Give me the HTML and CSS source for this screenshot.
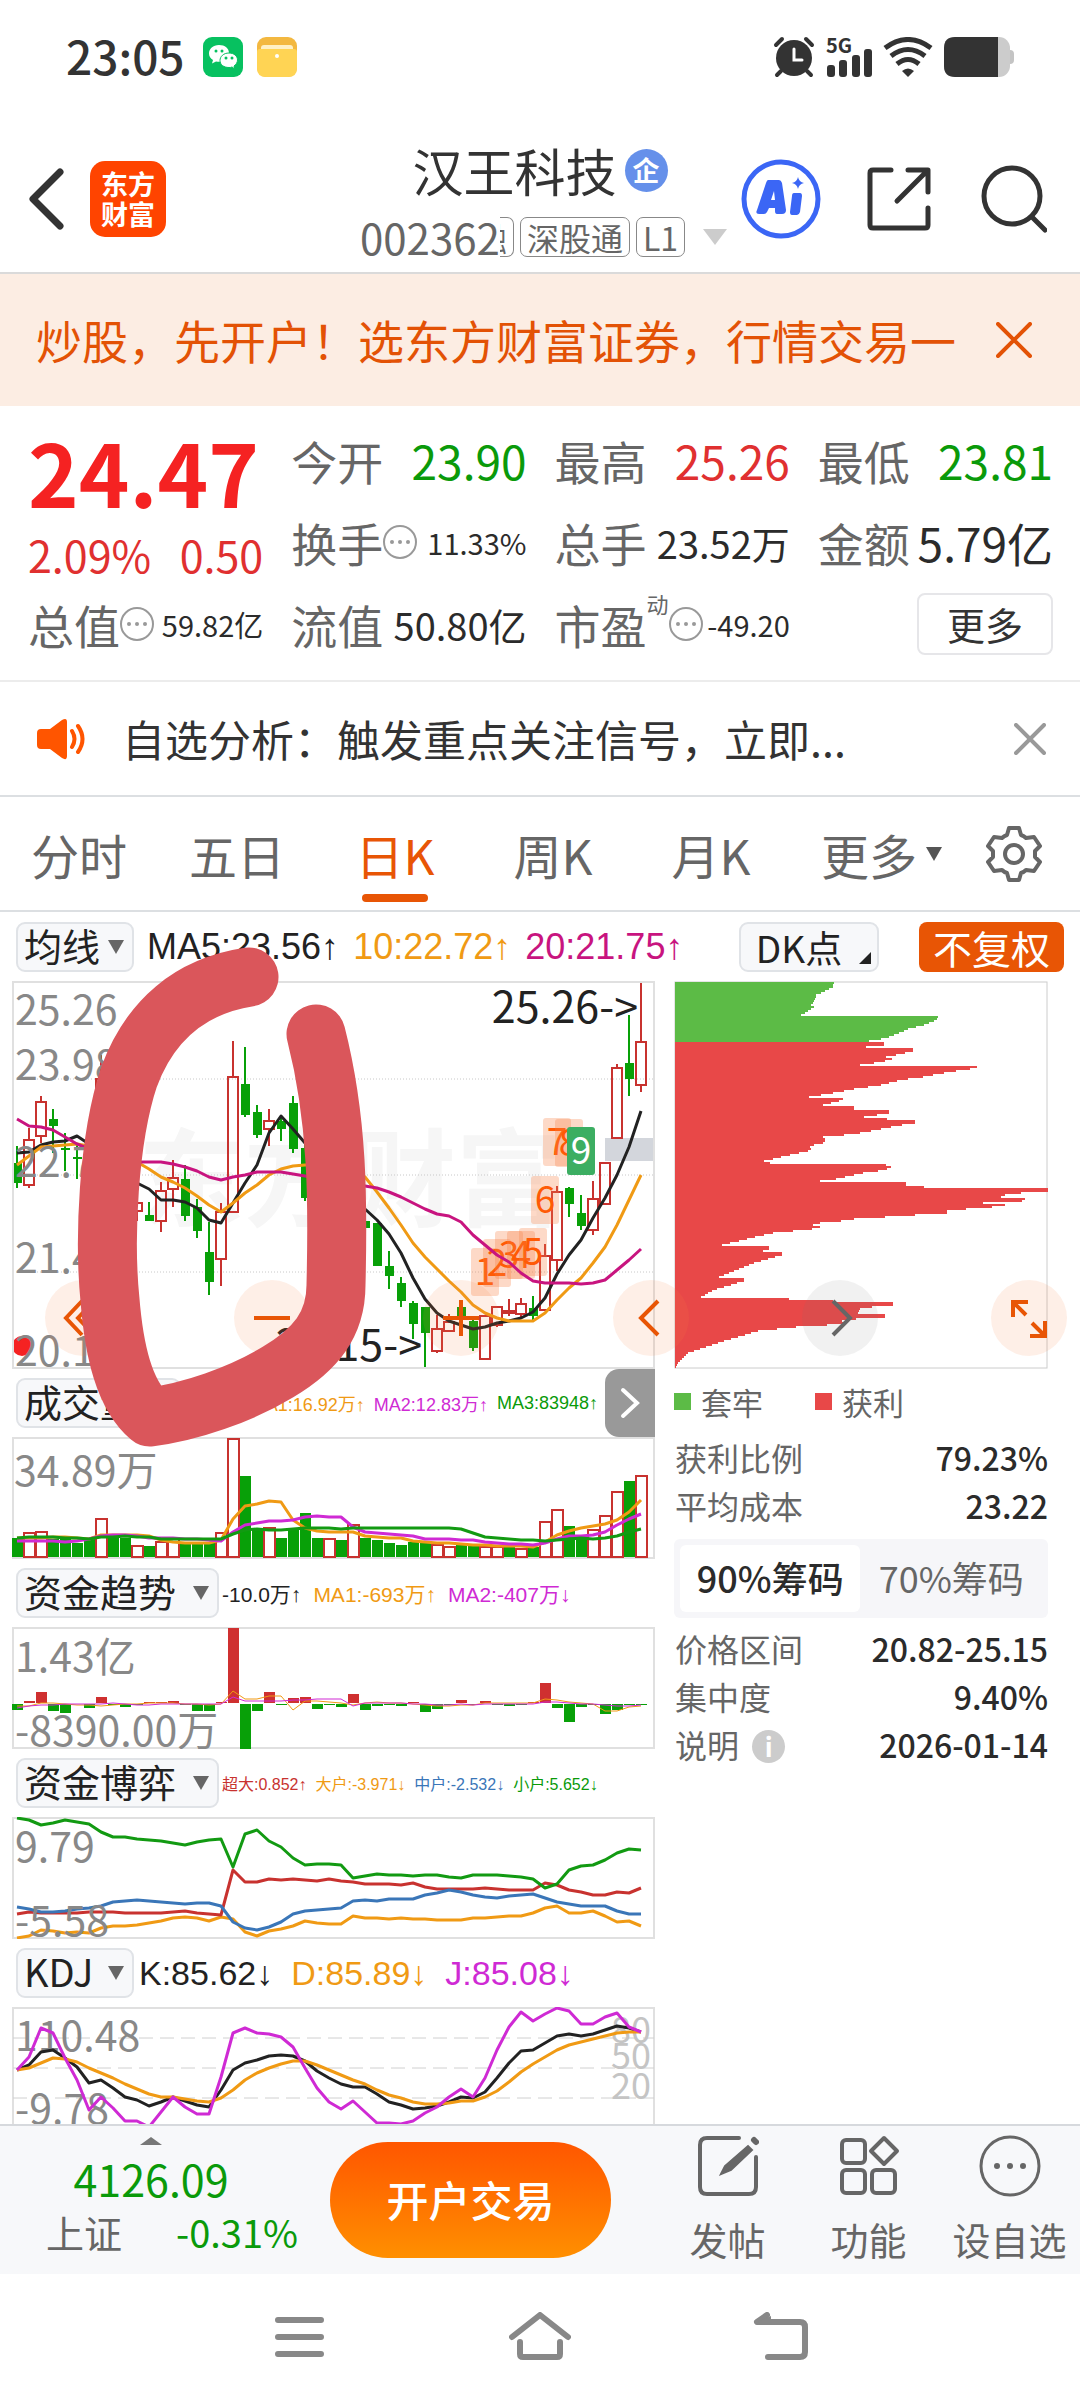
FILE: index.html
```html
<!DOCTYPE html>
<html lang="zh-CN">
<head>
    <meta charset="UTF-8">
    <meta name="viewport" content="width=device-width, initial-scale=1.0">
    <title>汉王科技 002362</title>
    <link rel="stylesheet" href="styles.css">
</head>
<body>

    <div class="status">
        <span class="time">23:05</span>
        <svg width="40" height="40" viewBox="0 0 40 40">
            <rect width="40" height="40" rx="9" fill="#07c160"/>
            <path d="M16 8c-6 0-10 4-10 8.500 0 3 1.500 5 4 6.500l-1 3.500 4-2c8 1.500 13-2.500 13-8S22 8 16 8z" fill="#fff"/>
            <path d="M26 16c-5.500 0-9 3.500-9 7.500s3.500 7 9 7c1 0 2 0 3-.5l3 2-1-3c2-1.500 3.500-3.500 3.500-6 0-4-3.500-7-8.500-7z" fill="#fff" stroke="#07c160" stroke-width="1"/>
            <g fill="#07c160"><circle cx="13" cy="14" r="1.500"/><circle cx="19" cy="14" r="1.500"/><circle cx="23" cy="21" r="1.500"/><circle cx="29" cy="21" r="1.500"/></g>
        </svg>
        <svg width="40" height="40" viewBox="0 0 40 40">
            <rect width="40" height="40" rx="9" fill="#f3b840"/>
            <rect x="4" y="8" width="32" height="10" rx="3" fill="#fff0c4"/>
            <path d="M0 15q0-3 3-3h34q3 0 3 3v16q0 9-9 9H9q-9 0-9-9z" fill="#ffd454"/>
            <circle cx="20" cy="19" r="2" fill="#fff"/>
        </svg>
        <div class="status-right">
            <svg width="42" height="42" viewBox="0 0 42 42" fill="none" stroke="#333" stroke-width="4" stroke-linecap="round">
                <circle cx="21" cy="22" r="18" fill="#333" stroke="none"/>
                <path d="M3 9l6-6M33 3l6 6M8 35l-4 4M34 35l4 4"/>
                <path d="M21 13v11h8" stroke="#fff" stroke-width="3"/>
            </svg>
            <div class="signal">
                <span>5G</span>
                <svg width="46" height="28" viewBox="0 0 46 28" fill="#333">
                    <rect x="1" y="16" width="8" height="12" rx="3"/><rect x="13" y="11" width="8" height="17" rx="3"/><rect x="26" y="6" width="8" height="22" rx="3"/><rect x="38" y="0" width="8" height="28" rx="3"/>
                </svg>
            </div>
            <svg width="50" height="40" viewBox="0 0 50 40" fill="none" stroke="#333" stroke-width="5">
                <path d="M2 11Q25-6 48 11M8 19q17-13 34 0M14 27q11-9 22 0"/>
                <path d="M19 34q6-5 12 0l-6 6z" fill="#333" stroke="none"/>
            </svg>
            <svg width="70" height="40" viewBox="0 0 70 40">
                <rect x="60" y="13" width="10" height="14" rx="4" fill="#c4c4c4"/>
                <rect width="66" height="40" rx="11" fill="#ccc"/>
                <path d="M11 0h43v40H11Q0 40 0 29V11Q0 0 11 0z" fill="#333"/>
            </svg>
        </div>
    </div>

    <header class="header">
        <a class="back" href="#" aria-label="返回">
            <svg width="36" height="62" viewBox="0 0 36 62" fill="none" stroke="#333" stroke-width="7" stroke-linecap="round" stroke-linejoin="round"><path d="M32 4L5 31l27 27"/></svg>
        </a>
        <a class="logo" href="#">东方<br>财富</a>
        <div class="title">
            <h1>汉王科技<span class="badge">企</span></h1>
            <div class="code">
                <span>002362</span>
                <span class="tag cut">融</span>
                <span class="tag">深股通</span>
                <span class="tag">L1</span>
                <svg class="more-caret" width="24" height="16" viewBox="0 0 24 16"><path d="M0 0h24L12 16z" fill="#ccc"/></svg>
            </div>
        </div>
        <div class="actions">
            <button aria-label="AI">
                <svg width="80" height="80" viewBox="0 0 80 80">
                    <circle cx="40" cy="40" r="37" fill="none" stroke="#3b66f5" stroke-width="5"/>
                    <path d="M27 21h11q2 0 3 3l4 27q0 4-4 4h-5q-2 0-2-3v-3h-6l-2 4q-1 2-3 2h-5q-4 0-2-4l9-27q1-3 2-3zm3 20h4l-1-9z" fill="#3b66f5" fill-rule="evenodd"/>
                    <path d="M53 34h6q2 0 2 3l-2 16q-1 3-3 3h-5q-2 0-2-3l2-16q0-3 2-3zM57 18q1 5 6 6-5 1-6 6-1-5-6-6 5-1 6-6z" fill="#3b66f5"/>
                </svg>
            </button>
            <button aria-label="分享">
                <svg width="64" height="64" viewBox="0 0 64 64" fill="none" stroke="#333" stroke-width="5" stroke-linecap="round" stroke-linejoin="round">
                    <path d="M24 3H6Q3 3 3 6v52q0 3 3 3h52q3 0 3-3V41M41 3h20v22M60 4L30 34"/>
                </svg>
            </button>
            <button aria-label="搜索">
                <svg width="70" height="68" viewBox="0 0 70 68" fill="none" stroke="#333" stroke-width="5" stroke-linecap="round">
                    <circle cx="35" cy="31" r="28"/><path d="M55 52l13 13"/>
                </svg>
            </button>
        </div>
    </header>

    <div class="promo">
        <a href="#">炒股，先开户！选东方财富证券，行情交易一</a>
        <button aria-label="关闭广告">
            <svg width="36" height="36" viewBox="0 0 36 36" stroke="#e35205" stroke-width="4" stroke-linecap="round"><path d="M2 2l32 32M34 2L2 34"/></svg>
        </button>
    </div>

    <section class="quote">
        <div class="price">
            <strong>24.47</strong>
            <div class="change"><span>2.09%</span><span>0.50</span></div>
        </div>
        <div class="item"><span>今开</span><b class="green">23.90</b></div>
        <div class="item"><span>最高</span><b class="red">25.26</b></div>
        <div class="item"><span>最低</span><b class="green">23.81</b></div>
        <div class="item"><span>换手</span><i class="dots"></i><b class="small">11.33%</b></div>
        <div class="item"><span>总手</span><b class="mid">23.52万</b></div>
        <div class="item"><span>金额</span><b>5.79亿</b></div>
        <div class="item"><span>总值</span><i class="dots"></i><b class="small">59.82亿</b></div>
        <div class="item"><span>流值</span><b class="mid">50.80亿</b></div>
        <div class="item"><span>市盈</span><sup>动</sup><i class="dots"></i><b class="small">-49.20</b></div>
        <div class="item"><button class="more">更多</button></div>
    </section>

    <div class="notice">
        <svg width="50" height="42" viewBox="0 0 50 42">
            <path d="M4 11h9L25 2q5-3 5 2v34q0 5-5 2L13 31H4q-4 0-4-4V15q0-4 4-4z" fill="#ff5500"/>
            <path d="M35 13q5 8 0 16M41 8q9 13 0 26" fill="none" stroke="#ff5500" stroke-width="4" stroke-linecap="round"/>
        </svg>
        <a href="#">自选分析：触发重点关注信号，立即...</a>
        <button aria-label="关闭提示">
            <svg width="32" height="32" viewBox="0 0 32 32" stroke="#999" stroke-width="4" stroke-linecap="round"><path d="M2 2l28 28M30 2L2 30"/></svg>
        </button>
    </div>

    <nav class="tabs">
        <button>分时</button>
        <button>五日</button>
        <button class="active">日K</button>
        <button>周K</button>
        <button>月K</button>
        <button class="period">更多<i class="caret"></i></button>
        <button aria-label="设置">
            <svg width="58" height="58" viewBox="0 0 58 58" fill="none" stroke="#666" stroke-width="4" stroke-linejoin="round">
                <path d="M24 3h10l2 7q3 1 5 3l8-1 6 9-5 5v6l5 5-6 9-8-1q-2 2-5 3l-2 7H24l-2-7q-3-1-5-3l-8 1-6-9 5-5v-6l-5-5 6-9 8 1q2-2 5-3z"/>
                <circle cx="29" cy="29" r="9"/>
            </svg>
        </button>
    </nav>

    <main class="charts">
        <div class="toolbar">
            <label class="pick short"><select aria-label="均线"><option>均线</option></select></label>
            <div class="legend ma">
                <span>MA5:23.56↑</span><span class="orange">10:22.72↑</span><span class="rose">20:21.75↑</span>
            </div>
            <button class="dk">DK点</button>
            <button class="fuquan">不复权</button>
        </div>

        <div class="left">
            <svg class="chart" viewBox="0 0 643 388">
                <text class="watermark" x="126" y="237">东方财富</text>
                <path class="dotted" d="M1 98H642M1 194H642M1 291H642"/>
                <rect x="593" y="157" width="49" height="23" fill="#d3d6dc"/>
                <circle cx="10" cy="365" r="10" fill="#f52222"/>
                <g id="candles"></g>
                <g id="signals"></g>
                <g id="maLines"></g>
                <g class="axis">
                    <text x="3" y="44">25.26</text><text x="3" y="99">23.98</text><text x="3" y="196">22.71</text><text x="3" y="292">21.43</text><text x="3" y="385">20.15</text>
                </g>
                <g class="mark"><text x="626" y="42">25.26-&gt;</text><text x="410" y="380">20.15-&gt;</text></g>
                <rect class="frame" x="1" y="1" width="641" height="386"/>
            </svg>

            <div class="row">
                <label class="pick mid"><select aria-label="副图一"><option>成交量</option></select></label>
                <div class="legend vol">
                    <span class="orange">MA1:16.92万↑</span><span class="purple">MA2:12.83万↑</span><span class="green">MA3:83948↑</span>
                </div>
                <button class="next" aria-label="下一组">
                    <svg width="20" height="32" viewBox="0 0 20 32" fill="none" stroke="#fff" stroke-width="4" stroke-linecap="round"><path d="M3 3l14 13L3 29"/></svg>
                </button>
            </div>
            <svg class="chart" viewBox="0 0 643 122">
                <rect class="frame" x="1" y="1" width="641" height="120"/>
                <g id="volume"></g>
                <g class="axis"><text x="2" y="49">34.89万</text></g>
            </svg>

            <div class="row">
                <label class="pick long"><select aria-label="副图二"><option>资金趋势</option></select></label>
                <div class="legend trend">
                    <span>-10.0万↑</span><span class="orange">MA1:-693万↑</span><span class="purple">MA2:-407万↓</span>
                </div>
            </div>
            <svg class="chart" viewBox="0 0 643 122">
                <rect class="frame" x="1" y="1" width="641" height="120"/>
                <g id="fund"></g>
                <g class="axis"><text x="3" y="45">1.43亿</text><text x="3" y="119">-8390.00万</text></g>
            </svg>

            <div class="row">
                <label class="pick long"><select aria-label="副图三"><option>资金博弈</option></select></label>
                <div class="legend game">
                    <span class="red">超大:0.852↑</span><span class="orange">大户:-3.971↓</span><span class="blue">中户:-2.532↓</span><span class="green">小户:5.652↓</span>
                </div>
            </div>
            <svg class="chart" viewBox="0 0 643 122">
                <rect class="frame" x="1" y="1" width="641" height="120"/>
                <g id="game"></g>
                <g class="axis"><text x="3" y="45">9.79</text><text x="3" y="119">-5.58</text></g>
            </svg>

            <div class="row">
                <label class="pick short"><select aria-label="副图四"><option>KDJ</option></select></label>
                <div class="legend kdj">
                    <span>K:85.62↓</span><span class="orange">D:85.89↓</span><span class="purple">J:85.08↓</span>
                </div>
            </div>
            <svg class="chart" viewBox="0 0 643 117">
                <path class="frame" d="M1 118V1H642V118"/>
                <path class="dashed" d="M1 31H642M1 61H642M1 91H642"/>
                <g class="axis right"><text x="639" y="36">80</text><text x="639" y="62">50</text><text x="639" y="92">20</text></g>
                <g class="axis"><text x="3" y="44">110.48</text><text x="3" y="117">-9.78</text></g>
                <g id="kdj"></g>
            </svg>
        </div>

        <aside class="right-col">
            <svg class="chart" viewBox="0 0 374 388">
                <rect x="1" y="1" width="372" height="386" fill="none" stroke="#ccc"/>
                <g id="chips"></g>
            </svg>
            <div class="keys">
                <span><i class="sq trapped"></i>套牢</span>
                <span><i class="sq profit"></i>获利</span>
            </div>
            <dl class="facts">
                <div><dt>获利比例</dt><dd>79.23%</dd></div>
                <div><dt>平均成本</dt><dd>23.22</dd></div>
            </dl>
            <div class="toggle">
                <button class="on">90%筹码</button>
                <button>70%筹码</button>
            </div>
            <dl class="facts">
                <div><dt>价格区间</dt><dd>20.82-25.15</dd></div>
                <div><dt>集中度</dt><dd>9.40%</dd></div>
                <div><dt>说明 <i class="info">i</i></dt><dd>2026-01-14</dd></div>
            </dl>
        </aside>

        <div class="controls">
            <button aria-label="快退"><svg viewBox="0 0 76 76"><path d="M49 21L33 38l16 17M37 21L21 38l16 17"/></svg></button>
            <button aria-label="缩小"><svg viewBox="0 0 76 76"><path d="M20 38h36"/></svg></button>
            <button aria-label="放大"><svg viewBox="0 0 76 76"><path d="M20 38h36M38 20v36"/></svg></button>
            <button aria-label="左移"><svg viewBox="0 0 76 76"><path d="M45 21L28 38l17 17"/></svg></button>
            <button class="grey" aria-label="右移"><svg viewBox="0 0 76 76"><path d="M31 21l17 17-17 17"/></svg></button>
            <button aria-label="全屏"><svg viewBox="0 0 76 76"><path d="M37 22H22v15M22 22l13 13M54 41v15H39M54 56L41 43"/></svg></button>
        </div>

        <svg class="pen" viewBox="0 0 1080 560">
            <path d="M249 65C190 74 150 108 129 165C108 228 104 328 110 388C114 438 124 483 150 505C190 500 240 483 278 460C315 438 336 413 336 373C338 290 338 208 316 122"/>
        </svg>
    </main>

    <footer class="bottom">
        <a class="index" href="#">
            <svg width="22" height="8" viewBox="0 0 22 8"><path d="M0 8L11 0l11 8z" fill="#777"/></svg>
            <span class="green point">4126.09</span>
            <span class="index-row"><span>上证</span><span class="green">-0.31%</span></span>
        </a>
        <button class="trade">开户交易</button>
        <div class="tools">
            <a href="#">
                <svg width="62" height="62" viewBox="0 0 62 62" fill="none" stroke="#666" stroke-width="4" stroke-linecap="round">
                    <path d="M42 3H10Q3 3 3 10v42q0 7 7 7h42q7 0 7-7V22"/><path d="M24 39l4-8L51 11l4 4-21 20z" fill="#666" stroke-width="2"/><path d="M57 5l2 2" stroke-width="6"/>
                </svg>
                发帖
            </a>
            <a href="#">
                <svg width="62" height="62" viewBox="0 0 62 62" fill="none" stroke="#666" stroke-width="4" stroke-linejoin="round">
                    <rect x="4" y="5" width="23" height="23" rx="4"/><rect x="4" y="35" width="23" height="23" rx="4"/><rect x="34" y="35" width="23" height="23" rx="4"/><path d="M46 3l13 13-13 13-13-13z"/>
                </svg>
                功能
            </a>
            <a href="#">
                <svg width="62" height="62" viewBox="0 0 62 62">
                    <circle cx="31" cy="31" r="29" fill="none" stroke="#666" stroke-width="3"/>
                    <g fill="#666"><circle cx="18" cy="31" r="3"/><circle cx="31" cy="31" r="3"/><circle cx="44" cy="31" r="3"/></g>
                </svg>
                设自选
            </a>
        </div>
    </footer>

    <nav class="sysnav">
        <button aria-label="最近任务"><svg width="62" height="50" viewBox="0 0 62 50" stroke="#888" stroke-width="6" stroke-linecap="round"><path d="M10 8h43M10 25h43M10 42h43"/></svg></button>
        <button aria-label="主页"><svg width="62" height="50" viewBox="0 0 62 50" fill="none" stroke="#888" stroke-width="6" stroke-linecap="round" stroke-linejoin="round"><path d="M3 25L31 3l28 22M11 30v12q0 3 3 3h34q3 0 3-3V30"/></svg></button>
        <button aria-label="返回上一页"><svg width="62" height="50" viewBox="0 0 62 50" fill="none" stroke="#888" stroke-width="6" stroke-linecap="round" stroke-linejoin="round"><path d="M17 3L7 10h43q5 0 5 5v25q0 5-5 5H18"/><path d="M7 10h14V4z" fill="#888" stroke="none"/></svg></button>
    </nav>

    <script src="script.js"></script>
</body>
</html>
```
FILE: styles.css
```css
:root {
    --text: #333;
    --sub: #666;
    --line: #dcdfe2;
    --red: #e03030;
    --green: #0a9a0a;
    --orange: #e85505;
    --panel: #f7f8fa;
}

* {
    box-sizing: border-box;
}

body {
    margin: 0;
    background: #fff;
    color: var(--text);
    font-family: "Noto Sans CJK SC", "Noto Sans", sans-serif;
    overflow-x: hidden;
}

button, select {
    font: inherit;
    color: inherit;
    background: none;
    border: none;
    padding: 0;
    margin: 0;
    cursor: pointer;
}

a {
    color: inherit;
    text-decoration: none;
}

svg {
    display: block;
    flex: none;
}

.green { color: var(--green); }
.red { color: #c8322f; }
.orange { color: #f09a14; }
.rose { color: #c8147f; }
.purple { color: #cf2ad4; }
.blue { color: #3a76b8; }

/* status bar */
.status {
    display: flex;
    align-items: center;
    gap: 14px;
    height: 114px;
    padding: 0 66px;
}

.time {
    font-size: 46px;
    font-weight: 500;
    line-height: 50px;
    margin-right: 4px;
    padding-bottom: 4px;
}

.status-right {
    display: flex;
    align-items: center;
    gap: 11px;
    margin-left: auto;
}

.signal {
    height: 40px;
}

.signal span {
    display: block;
    font-size: 20px;
    font-weight: 700;
    line-height: 16px;
    height: 12px;
}

/* header */
.header {
    display: flex;
    align-items: center;
    height: 160px;
    padding: 12px 33px 0 28px;
    border-bottom: 2px solid #dadada;
}

.logo {
    width: 76px;
    height: 76px;
    margin-left: 26px;
    padding: 8px 0;
    border-radius: 15px;
    background: #ff4400;
    color: #fff;
    font-size: 27px;
    font-weight: 700;
    line-height: 30px;
    text-align: center;
}

.title {
    flex: 1;
    margin-left: 194px;
    padding-top: 12px;
}

h1 {
    display: flex;
    align-items: center;
    justify-content: center;
    gap: 8px;
    width: 354px;
    margin: 0;
    padding-left: 6px;
    font-size: 51px;
    font-weight: 400;
    line-height: 64px;
    white-space: nowrap;
}

.badge {
    width: 43px;
    height: 43px;
    border-radius: 50%;
    background: #6590ea;
    color: #fff;
    font-size: 27px;
    font-weight: 700;
    line-height: 42px;
    text-align: center;
}

.code {
    display: flex;
    align-items: center;
    gap: 6px;
    color: var(--sub);
    font-size: 42px;
    line-height: 70px;
    white-space: nowrap;
}

.tag {
    padding: 0 6px;
    border: 1px solid #888;
    border-radius: 7px;
    font-size: 32px;
    line-height: 38px;
}

.tag.cut {
    display: flex;
    justify-content: flex-end;
    width: 14px;
    margin-left: -6px;
    border-left: none;
    border-radius: 0 7px 7px 0;
    overflow: hidden;
}

.more-caret {
    margin-left: 12px;
}

.actions {
    display: flex;
    align-items: center;
    gap: 46px;
}

/* promo */
.promo {
    display: flex;
    align-items: center;
    justify-content: space-between;
    height: 132px;
    padding: 0 48px 0 36px;
    background: #fcede3;
    color: #e35205;
    font-size: 46px;
}

.promo a {
    padding-bottom: 2px;
    white-space: nowrap;
    overflow: hidden;
}

/* quote */
.quote {
    display: grid;
    grid-template-columns: repeat(4, 1fr);
    grid-auto-rows: 82px;
    column-gap: 28px;
    padding: 13px 27px 15px 28px;
    border-bottom: 2px solid #ececec;
}

.price {
    grid-row: span 2;
    color: #f52222;
}

.price strong {
    display: block;
    font-size: 86px;
    line-height: 104px;
}

.change {
    display: flex;
    justify-content: space-between;
    color: var(--red);
    font-size: 43px;
    line-height: 62px;
}

.item {
    display: flex;
    align-items: center;
    color: var(--sub);
    font-size: 46px;
    white-space: nowrap;
}

.item b {
    margin-left: auto;
    color: #2b2b2b;
    font-weight: 400;
}

.item b.red { color: var(--red); }
.item b.green { color: var(--green); }
.item b.mid { font-size: 38px; }
.item b.small { font-size: 29px; }

.item sup {
    align-self: flex-start;
    font-size: 22px;
    line-height: 40px;
}

.dots {
    display: flex;
    align-items: center;
    justify-content: center;
    width: 34px;
    height: 34px;
    border: 2px solid #999;
    border-radius: 50%;
}

.dots::before {
    content: "";
    width: 4px;
    height: 4px;
    border-radius: 50%;
    background: #999;
    box-shadow: -8px 0 #999, 8px 0 #999;
}

.more {
    width: 136px;
    height: 62px;
    margin-left: auto;
    border: 2px solid #e6e6e9;
    border-radius: 8px;
    color: var(--text);
    font-size: 38px;
    line-height: 56px;
}

/* notice */
.notice {
    display: flex;
    align-items: center;
    height: 115px;
    padding: 0 34px 0 37px;
    border-bottom: 2px solid var(--line);
    font-size: 43px;
}

.notice a {
    margin: 0 auto 0 35px;
    padding-bottom: 2px;
    white-space: nowrap;
}

/* period tabs */
.tabs {
    display: grid;
    grid-template-columns: repeat(6, 158fr) 132fr;
    height: 115px;
    border-bottom: 2px solid var(--line);
    color: var(--sub);
    font-size: 48px;
}

.tabs button {
    display: flex;
    align-items: center;
    justify-content: center;
    position: relative;
    white-space: nowrap;
}

.tabs .period {
    justify-content: flex-end;
    padding-right: 6px;
}

.tabs .active {
    color: var(--orange);
}

.tabs .active::after {
    content: "";
    position: absolute;
    bottom: 8px;
    width: 66px;
    height: 8px;
    border-radius: 4px;
    background: var(--orange);
}

.caret {
    margin-left: 9px;
    border: 8px solid transparent;
    border-top: 14px solid #555;
    border-bottom: none;
}

/* charts */
.charts {
    position: relative;
    display: grid;
    grid-template-columns: 643fr 374fr;
    column-gap: 19px;
    padding: 0 32px 0 12px;
}

.toolbar {
    grid-column: 1 / -1;
    display: flex;
    align-items: center;
    height: 69px;
    margin-right: -16px;
}

.row {
    display: flex;
    align-items: center;
    height: 68px;
}

.chart {
    width: 100%;
    height: auto;
    overflow: hidden;
}

.pick {
    position: relative;
    flex: none;
    height: 50px;
    margin-left: 4px;
    border: 2px solid #e0e3e7;
    border-radius: 9px;
    background: var(--panel);
    color: #222;
    font-size: 38px;
}

.pick.short { width: 118px; }
.pick.mid { width: 165px; }
.pick.long { width: 203px; }

.pick select {
    display: block;
    width: 100%;
    height: 46px;
    padding: 0 0 4px 6px;
    line-height: 42px;
    appearance: none;
}

.pick::after {
    content: "";
    position: absolute;
    right: 8px;
    top: 16px;
    border: 8px solid transparent;
    border-top: 14px solid #666;
    border-bottom: none;
    pointer-events: none;
}

.legend {
    display: flex;
    align-items: center;
    color: #222;
    font-family: "Liberation Sans", "Noto Sans CJK SC", sans-serif;
    white-space: nowrap;
}

.legend.ma { margin-left: 13px; gap: 14px; font-size: 36px; }
.legend.vol { margin-left: auto; margin-right: 7px; gap: 9px; font-size: 18px; }
.legend.trend { margin-left: 3px; gap: 12px; font-size: 21px; }
.legend.game { margin-left: 3px; gap: 9px; font-size: 16px; }
.legend.kdj { margin-left: 5px; gap: 18px; font-size: 34px; }

.dk {
    position: relative;
    width: 140px;
    height: 50px;
    margin-left: auto;
    padding-right: 20px;
    border: 2px solid #e0e3e7;
    border-radius: 9px;
    background: var(--panel);
    color: #222;
    font-size: 37px;
    line-height: 42px;
    white-space: nowrap;
}

.dk::after {
    content: "";
    position: absolute;
    right: 6px;
    bottom: 6px;
    border-left: 12px solid transparent;
    border-bottom: 12px solid #222;
}

.fuquan {
    width: 145px;
    height: 50px;
    margin-left: 40px;
    border-radius: 8px;
    background: var(--orange);
    color: #fff;
    font-size: 39px;
    line-height: 46px;
}

.next {
    display: flex;
    align-items: center;
    justify-content: center;
    width: 50px;
    height: 68px;
    border-radius: 14px 0 0 14px;
    background: #999;
}

.frame { fill: none; stroke: #e0e0e0; stroke-width: 2; }
.dotted { stroke: #c8c8c8; stroke-dasharray: 1 2; }
.dashed { stroke: #d0d0d0; stroke-width: 1; stroke-dasharray: 14 7; }
.watermark { font-size: 106px; font-weight: 700; fill: #f6f6f6; }
.axis text { font-size: 41px; fill: #888; }
.axis.right text { font-size: 36px; fill: #c4c4c4; text-anchor: end; }
.mark text { font-size: 43px; fill: #222; text-anchor: end; }
.signal-no { font-size: 37px; text-anchor: middle; }

/* chip distribution */
.keys {
    display: flex;
    gap: 52px;
    height: 64px;
    align-items: center;
    color: var(--sub);
    font-size: 31px;
}

.keys span {
    display: flex;
    align-items: center;
    gap: 10px;
}

.sq {
    width: 17px;
    height: 17px;
}

.trapped { background: #5cbb46; }
.profit { background: #e84848; }

.facts {
    margin: 0 0 0 1px;
    color: var(--sub);
    font-size: 32px;
    line-height: 48px;
}

.facts div {
    display: flex;
    justify-content: space-between;
}

.facts dd {
    margin: 0;
    color: #2b2b2b;
    font-weight: 500;
}

.info {
    display: inline-block;
    width: 33px;
    height: 33px;
    margin-left: 6px;
    border-radius: 50%;
    background: #ccc;
    color: #fff;
    font-size: 26px;
    font-style: normal;
    font-weight: 700;
    line-height: 32px;
    text-align: center;
    vertical-align: 1px;
}

.toggle {
    display: grid;
    grid-template-columns: 180fr 181fr;
    height: 79px;
    margin: 10px 0 6px;
    padding: 6px;
    border-radius: 6px;
    background: #f6f6f9;
    color: var(--sub);
    font-size: 36px;
    white-space: nowrap;
}

.toggle button {
    padding-bottom: 4px;
}

.toggle .on {
    border-radius: 6px;
    background: #fff;
    color: #2b2b2b;
    font-weight: 500;
}

/* round buttons over the charts */
.controls {
    position: absolute;
    top: 368px;
    left: 45px;
    right: 13px;
    display: flex;
    justify-content: space-between;
}

.controls button {
    width: 76px;
    height: 76px;
    border-radius: 50%;
    background: rgba(250, 130, 70, 0.13);
}

.controls .grey {
    background: rgba(120, 120, 120, 0.1);
}

.controls path {
    fill: none;
    stroke: var(--orange);
    stroke-width: 4;
}

.controls .grey path {
    stroke: #666;
}

.pen {
    position: absolute;
    top: 0;
    left: 0;
    width: 100%;
    pointer-events: none;
}

.pen path {
    fill: none;
    stroke: #da565b;
    stroke-width: 59;
    stroke-linecap: round;
    stroke-linejoin: round;
}

/* bottom bar */
.bottom {
    display: flex;
    align-items: center;
    height: 150px;
    border-top: 2px solid #d6d9dd;
    background: var(--panel);
}

.index {
    display: flex;
    flex-direction: column;
    align-items: center;
    width: 302px;
    padding-bottom: 4px;
    color: var(--sub);
    font-size: 38px;
    line-height: 54px;
}

.point {
    margin-top: 6px;
    font-size: 43px;
    line-height: 54px;
}

.index-row {
    display: flex;
    justify-content: space-between;
    width: 100%;
    padding: 0 4px 0 46px;
}

.trade {
    width: 281px;
    height: 116px;
    margin-left: 28px;
    padding-bottom: 4px;
    border-radius: 58px;
    background: linear-gradient(#ff5600, #ff8f00);
    color: #fff;
    font-size: 42px;
    font-weight: 500;
}

.tools {
    display: grid;
    grid-template-columns: repeat(3, 141px);
    margin-left: auto;
    color: var(--sub);
    font-size: 38px;
    line-height: 52px;
}

.tools a {
    display: flex;
    flex-direction: column;
    align-items: center;
    gap: 16px;
}

/* system navigation */
.sysnav {
    display: grid;
    grid-template-columns: repeat(3, 1fr);
    justify-items: center;
    align-items: center;
    width: 67%;
    height: 126px;
    margin: 0 auto;
}
```
FILE: script.js
```js
const STEP = 12;
const START = 5;
const RED = '#c8322f';
const GREEN = '#08a008';
const ORANGE = '#f09a14';
const PURPLE = '#cf2ad4';

// x of the n-th day
const px = i => START + i * STEP;

function line(values, color, width) {
    const points = values.map((y, i) => `${px(i)},${y}`).join(' ');
    return `<polyline points="${points}" fill="none" stroke="${color}" stroke-width="${width}" stroke-linejoin="round"/>`;
}

function put(id, html) {
    document.getElementById(id).innerHTML = html;
}

// [day, high, top, bottom, low, up]
const candles = [
    [0,165,182,202,207,0],[1,147,159,204,207,1],[2,115,121,155,162,1],[3,128,138,145,172,0],[4,152,167,169,190,0],
    [5,164,176,178,198,0],[7,74,98,150,170,1],[10,216,222,230,240,1],[11,221,234,240,240,0],[12,201,210,240,251,1],
    [13,179,197,208,226,1],[14,184,198,235,240,0],[15,218,226,250,257,0],[16,241,271,301,314,0],[17,222,231,278,305,1],
    [18,60,96,231,232,1],[19,66,103,134,136,0],[20,124,131,154,157,0],[21,128,140,148,165,1],[22,135,140,148,160,0],
    [23,115,122,168,172,0],[24,160,167,217,220,0],[29,227,240,247,263,0],[30,242,242,285,285,0],[31,270,285,295,308,0],
    [32,296,302,320,326,0],[33,320,322,343,358,0],[34,326,326,352,388,0],[35,334,348,370,372,1],[36,333,341,350,350,1],
    [37,320,326,339,346,0],[38,339,340,367,370,0],[39,335,335,378,379,1],[40,325,326,344,346,1],[41,318,330,332,335,1],
    [42,317,323,333,336,1],[43,315,327,335,339,0],[44,263,275,329,329,1],[45,205,211,279,290,1],[46,206,207,223,236,0],
    [47,214,232,245,249,0],[48,200,218,249,254,1],[49,181,182,223,223,1],[50,83,87,157,157,1],[51,34,82,98,115,0],
    [52,1,61,104,111,1]
];

put('candles', candles.map(([i, high, top, bottom, low, up]) => {
    const x = px(i);
    if (up) {
        return `<path d="M${x} ${high}V${top}M${x} ${bottom}V${low}" stroke="${RED}" stroke-width="2"/>
            <rect x="${x - 5}" y="${top}" width="10" height="${bottom - top}" fill="none" stroke="${RED}" stroke-width="2"/>`;
    }
    return `<path d="M${x} ${high}V${low}" stroke="${GREEN}" stroke-width="2"/>
        <rect x="${x - 4}" y="${top}" width="9" height="${bottom - top}" fill="${GREEN}"/>`;
}).join(''));

const ma5 = [172,171,164,161,160,155,163,176,188,196,202,208,219,219,221,227,239,242,222,202,184,152,135,148,162,175,188,202,215,228,239,253,272,297,318,332,340,344,348,346,342,340,337,331,317,293,274,259,237,217,194,166,130];
const ma10 = [184,175,166,165,164,163,165,168,172,176,181,188,196,201,207,215,224,231,222,212,204,194,188,185,184,184,186,188,191,196,211,227,244,262,276,288,300,311,324,332,337,340,340,340,332,319,307,297,282,266,244,219,194];
const ma20 = [138,145,146,149,156,163,168,173,177,180,181,181,181,183,186,190,196,199,196,194,191,191,191,193,195,197,199,201,203,205,207,211,216,222,228,233,235,241,254,264,274,281,292,300,302,302,302,303,302,299,289,279,268];
put('maLines', line(ma5, '#222', 3) + line(ma10, ORANGE, 3) + line(ma20, '#c8147f', 3));

const signalTops = [267, 258, 250, 250, 247, 195, 137, 138, 146];
put('signals', signalTops.map((y, i) => {
    const x = 459 + i * STEP;
    const last = i === 8;
    return `<rect x="${x}" y="${y}" width="28" height="48" rx="3" fill="${last ? '#3cae62' : '#fa8246'}" fill-opacity="${last ? 1 : 0.3}"/>
        <text class="signal-no" x="${x + 14}" y="${y + 37}" fill="${last ? '#fff' : '#ff5a05'}">${i + 1}</text>`;
}).join(''));

const volumes = [19,24,25,18,18,14,19,38,19,19,11,11,15,19,14,13,14,24,118,81,28,29,19,27,44,19,18,17,32,19,17,14,12,15,15,12,10,13,11,10,10,10,8,10,35,47,31,22,27,41,65,76,81];
const upDays = [1,2,7,10,12,13,17,18,21,26,28,35,36,39,40,42,44,45,48,49,50,52];
const volMa1 = [101,101,101,100,100,101,102,98,98,98,98,99,103,105,106,106,106,103,82,69,67,64,65,83,91,94,95,95,95,99,100,101,101,104,105,106,106,107,108,108,109,109,109,110,105,98,94,91,89,87,83,75,63];
const volMa2 = [104,104,104,104,105,104,102,99,98,98,99,101,101,101,102,102,103,104,95,88,86,84,84,83,80,79,80,80,90,95,96,97,98,99,102,102,102,103,103,105,106,107,107,108,106,102,99,99,98,95,88,82,77];
const volMa3 = [101,100,100,100,101,101,102,100,100,99,100,100,102,102,102,102,102,102,97,93,92,93,93,92,91,91,91,92,91,91,91,91,91,91,91,91,91,92,96,100,101,102,103,103,104,103,102,101,102,101,99,95,92];
put('volume', volumes.map((h, i) => upDays.includes(i)
    ? `<rect x="${px(i) - 5}" y="${120 - h}" width="11" height="${h}" fill="#fff" stroke="${RED}" stroke-width="2"/>`
    : `<rect x="${px(i) - 5}" y="${120 - h}" width="11" height="${h}" fill="${GREEN}"/>`
).join('') + line(volMa1, ORANGE, 3) + line(volMa2, PURPLE, 3) + line(volMa3, '#129a12', 3));

const funds = [-6,2,11,-7,-9,0,-4,6,-1,-3,-1,1,1,2,-1,-7,-7,1,75,-45,-7,11,-1,5,6,-5,-1,-3,9,-6,-2,-1,-2,1,-8,-5,-1,3,-1,2,-1,-2,-1,1,20,-4,-18,-3,-1,-10,-6,-1,-1];
const fundMa1 = [79,79,76,76,77,78,78,79,78,77,77,76,76,76,77,77,78,77,64,72,72,69,69,83,74,74,75,76,78,76,75,76,76,77,78,79,79,78,78,76,76,76,76,76,72,73,75,76,77,84,84,80,79];
const fundMa2 = [81,79,78,78,77,77,77,77,76,77,78,78,77,77,77,77,77,77,70,74,74,74,74,73,73,72,72,72,79,76,76,76,76,77,77,78,78,77,78,77,77,77,77,77,75,75,76,77,77,78,79,79,78];
put('fund', funds.map((v, i) => v === 0 ? '' :
    `<rect x="${px(i) - 5}" y="${v > 0 ? 76 - v : 77}" width="11" height="${Math.abs(v)}" fill="${v > 0 ? '#cf3030' : GREEN}"/>`
).join('') + line(fundMa1, ORANGE, 1) + line(fundMa2, PURPLE, 1));

const small = [1,3,8,6,3,5,7,15,20,20,22,23,24,26,28,25,23,22,50,17,13,24,30,41,48,47,47,48,61,59,57,58,58,59,58,58,60,61,58,58,58,59,60,62,71,67,53,49,48,43,36,32,33];
const huge = [97,95,96,96,96,96,95,95,95,96,96,96,96,95,94,96,97,98,53,65,65,62,63,62,63,64,62,64,65,67,67,67,68,66,70,72,72,72,72,71,72,73,73,73,66,68,73,75,78,78,75,76,71];
const middle = [90,92,95,95,94,92,91,89,85,84,83,84,85,86,87,86,86,89,105,111,113,110,105,97,94,93,92,91,84,83,84,82,82,82,78,76,73,75,78,80,81,79,78,77,81,85,87,89,89,89,94,97,97];
const large = [121,119,113,114,116,115,116,111,109,109,108,106,104,101,100,101,104,100,102,115,119,114,112,109,104,106,107,107,99,101,101,102,101,102,102,103,103,103,101,101,100,99,99,96,91,89,96,96,94,99,105,104,109];
put('game', line(large, ORANGE, 3) + line(huge, RED, 3) + line(middle, '#3a76b8', 3) + line(small, '#129a12', 3));

const k = [63,58,45,43,51,60,76,73,81,90,93,99,95,90,94,98,100,83,63,56,53,49,48,49,54,64,71,77,80,80,87,95,98,102,101,99,95,90,91,85,71,56,44,43,36,29,27,29,27,23,19,21,25];
const dLine = [63,61,56,51,52,55,61,66,71,77,82,87,90,90,92,94,95,91,83,73,66,61,57,54,54,58,63,68,73,77,83,88,91,95,97,97,96,94,94,90,84,75,65,57,50,43,38,35,32,29,26,25,25];
const j = [63,50,21,26,51,73,103,90,101,114,114,120,105,90,100,107,107,70,26,21,26,27,30,40,61,81,95,102,94,105,116,116,117,114,106,100,90,82,90,71,43,20,5,14,7,1,4,17,17,10,6,20,25];
put('kdj', line(k, '#222', 3) + line(dLine, ORANGE, 3) + line(j, PURPLE, 3));

// chip distribution outline, [width, y]
const chips = [
    [159,0],[158,6],[148,11],[141,14],[140,19],[136,24],[139,26],[133,30],[128,33],[123,35],[263,36],[262,39],[249,44],[233,48],
    [224,52],[214,56],[206,58],[198,59],[189,61],[209,62],[209,64],[191,66],[238,68],[238,70],[221,74],[211,76],[217,77],[217,78],
    [206,81],[185,84],[302,85],[302,87],[274,91],[248,96],[226,99],[206,104],[179,108],[164,111],[146,114],[134,116],[168,117],
    [168,119],[148,124],[179,125],[179,128],[168,129],[214,130],[214,132],[189,136],[175,137],[212,138],[240,140],[240,142],
    [221,145],[201,149],[179,153],[148,156],[151,159],[148,162],[134,165],[137,169],[124,172],[106,176],[89,180],[95,182],[206,183],
    [216,185],[216,187],[203,190],[188,192],[174,195],[161,198],[137,201],[231,202],[231,204],[214,205],[249,206],[373,208],
    [373,210],[346,212],[330,214],[302,215],[350,217],[350,219],[343,221],[308,222],[330,224],[330,225],[291,228],[258,229],
    [272,230],[272,232],[240,234],[210,236],[179,238],[159,241],[131,243],[145,245],[145,247],[128,249],[98,252],[76,257],[47,264],
    [94,265],[94,268],[85,271],[107,272],[107,274],[76,283],[42,297],[69,298],[69,300],[39,309],[26,316],[69,317],[158,319],
    [158,320],[218,321],[218,324],[186,327],[183,332],[210,333],[210,336],[166,339],[168,343],[121,346],[83,350],[46,361],[13,372],
    [4,381],[1,386]
];

function chipWidth(y) {
    const n = chips.findIndex(c => c[1] >= y);
    if (n <= 0) return chips[0][0];
    const [w1, y1] = chips[n - 1];
    const [w2, y2] = chips[n];
    return Math.round(w1 + (w2 - w1) * (y - y1) / (y2 - y1));
}

let chipBars = '';
for (let y = 1; y < 386; y += 2) {
    chipBars += `<rect x="1" y="${y}" width="${chipWidth(y + 1)}" height="2" fill="${y < 61 ? '#5cbb46' : '#e84848'}"/>`;
}
put('chips', chipBars);
```
